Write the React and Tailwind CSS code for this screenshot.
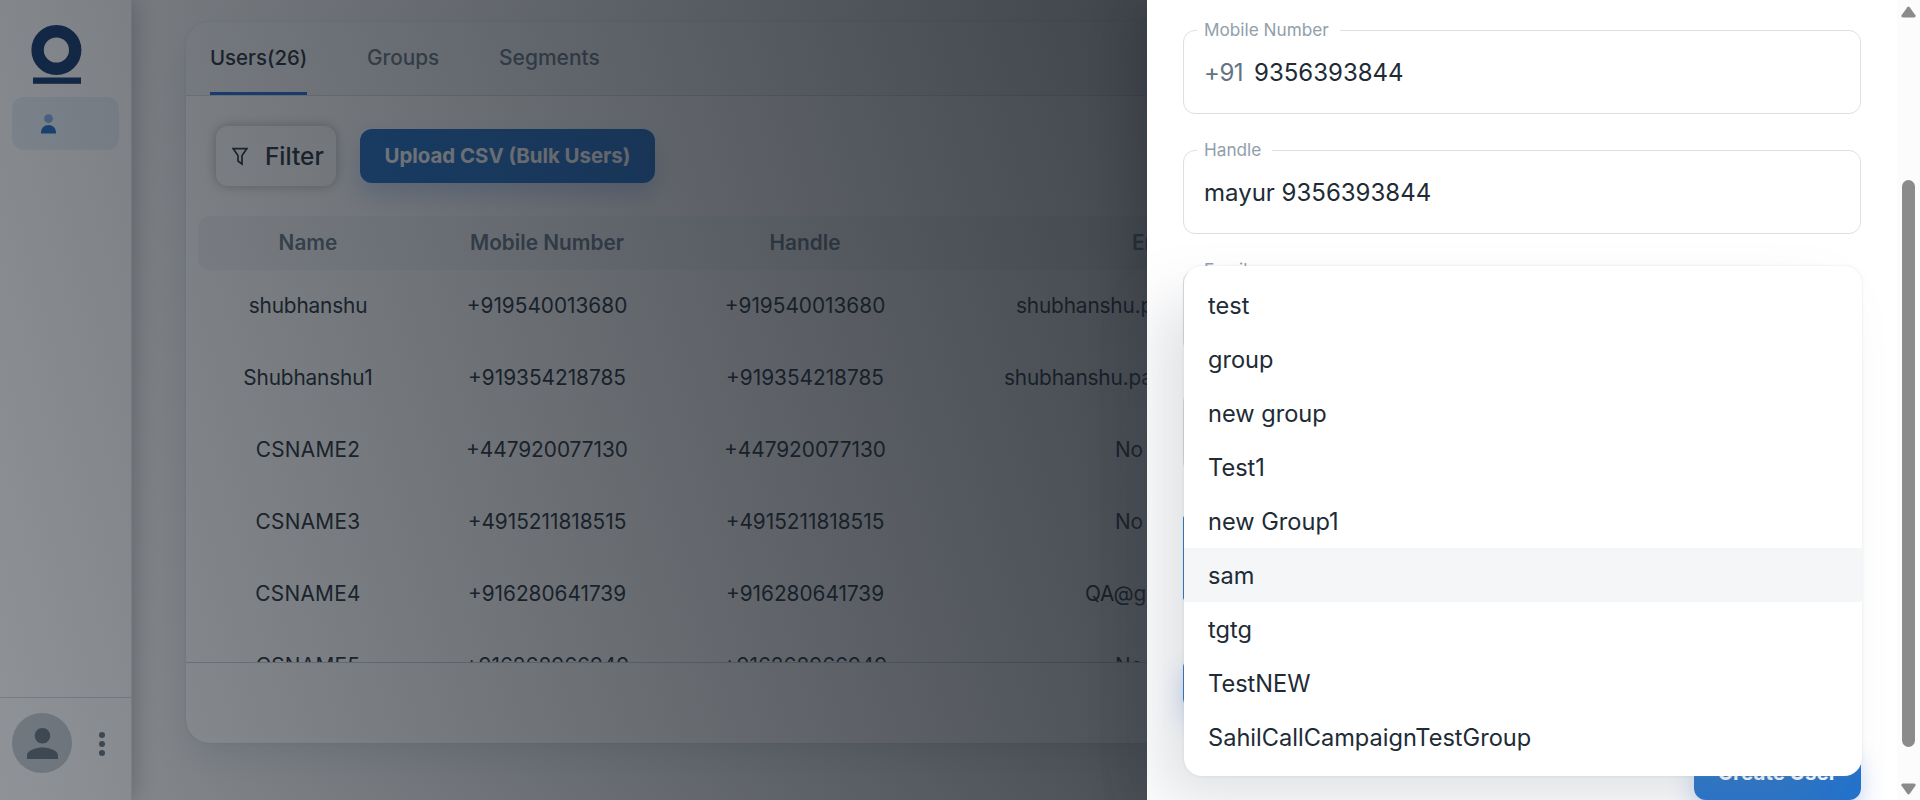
import React from "react";

const tabs = [
  { label: "Users(26)", cls: "text-[#212b36] border-[#2065d1] w-[97px] text-[20.4px]" },
  { label: "Groups", cls: "text-[#637381] border-transparent w-[72px] text-[20.8px]" },
  { label: "Segments", cls: "text-[#637381] border-transparent w-[101px] text-[21px]" },
];

const rows = [
  ["shubhanshu", "+919540013680", "shubhanshu.pandey@gallabox", "w-[286px]"],
  ["Shubhanshu1", "+919354218785", "shubhanshu.pandey1@gallabox", "w-[310px]"],
  ["CSNAME2", "+447920077130", "No Email", "w-[88px]"],
  ["CSNAME3", "+4915211818515", "No Email", "w-[88px]"],
  ["CSNAME4", "+916280641739", "QA@gallabox.io", "w-[148px]"],
  ["CSNAME5", "+916268966949", "No Email", "w-[88px]"],
];

const groups = [
  "test",
  "group",
  "new group",
  "Test1",
  "new Group1",
  "sam",
  "tgtg",
  "TestNEW",
  "SahilCallCampaignTestGroup",
];

function Sidebar() {
  return (
    <aside className="flex h-full w-[132px] shrink-0 flex-col border-r border-[#919eab]/25 bg-white shadow-[0_0_24px_rgba(0,0,0,0.3)]">
      <svg className="ml-[31px] mt-[25px] h-[59px] w-[51px]" viewBox="0 0 51 59">
        <circle cx="25.4" cy="25" r="18.8" fill="none" stroke="#0c356c" strokeWidth="12.4" />
        <rect x="2" y="52.5" width="48" height="6.3" fill="#0c356c" />
      </svg>
      <div className="ml-3 mt-[13px] flex h-[53px] w-[107px] items-center rounded-xl bg-[#1976d2]/10 pl-[29px]">
        <svg className="h-5 w-[15px]" viewBox="0 0 15 20">
          <circle cx="7.5" cy="4.6" r="4.4" fill="#1b6bc4" opacity="0.5" />
          <path d="M0 19.5V18a7.5 7 0 0 1 15 0v1.5z" fill="#1b6bc4" />
        </svg>
      </div>
      <div className="mt-auto flex h-[103px] items-start border-t border-[#919eab]/40 pl-3 pt-[15px]">
        <div className="flex h-[60px] w-[60px] items-center justify-center rounded-full bg-[#c4cdd5]">
          <svg className="h-[31px] w-[31px]" viewBox="4 4 16 16" fill="#637381">
            <path d="M12 12c2.210 0 4-1.790 4-4s-1.790-4-4-4-4 1.790-4 4 1.790 4 4 4zm0 2c-2.670 0-8 1.340-8 4v2h16v-2c0-2.660-5.330-4-8-4z" />
          </svg>
        </div>
        <svg className="ml-[27px] mt-[19px] h-6 w-[6px]" viewBox="0 0 6 24" fill="#637381">
          <circle cx="3" cy="3" r="3" />
          <circle cx="3" cy="12" r="3" />
          <circle cx="3" cy="21" r="3" />
        </svg>
      </div>
    </aside>
  );
}

function UsersCard() {
  return (
    <section className="ml-[54px] mt-[22px] flex h-[721px] w-[1680px] shrink-0 flex-col overflow-hidden rounded-3xl bg-white shadow-[0_0_3px_rgba(145,158,171,0.3),0_18px_36px_-6px_rgba(145,158,171,0.3)]">
      <nav className="flex h-[74px] shrink-0 gap-[60px] border-b border-[#919eab]/30 bg-[#f4f6f8] pl-6">
        {tabs.map((t) => (
          <div key={t.label} className={`flex h-[73px] items-center whitespace-nowrap border-b-[3px] pt-[2px] font-medium ${t.cls}`}>
            {t.label}
          </div>
        ))}
      </nav>
      <div className="flex shrink-0 items-center gap-6 pl-[30px] pt-[30px]">
        <button className="flex h-[60px] w-[120px] items-center rounded-xl bg-white pl-4 text-[24.400px] font-medium text-[#212b36] shadow-[0_0_12px_rgba(0,0,0,0.3)]">
          <svg className="h-[19px] w-4" viewBox="0 0 16 19" fill="none" stroke="#212b36" strokeWidth="1.7">
            <path d="M1.200 1.700h13.600L10 8.600v8.400l-4-3V8.600z" />
          </svg>
          <span className="ml-[17px]">Filter</span>
        </button>
        <button className="flex h-[54px] w-[295px] items-center justify-center whitespace-nowrap rounded-xl bg-[#1d6bc2] text-[20.4px] font-bold text-white shadow-[0_12px_24px_rgba(32,101,209,0.24)]">
          Upload CSV (Bulk Users)
        </button>
      </div>
      <div className="ml-3 mt-[30px] h-[446px] overflow-hidden">
        <div className="grid h-[54px] w-[1656px] grid-cols-[220px_258px_258px_450px] items-center rounded-xl bg-[#f4f6f8] text-center text-[20.800px] font-semibold text-[#637381]">
          <span>Name</span>
          <span>Mobile Number</span>
          <span>Handle</span>
          <span>Email</span>
        </div>
        {rows.map(([name, phone, email, w]) => (
          <div key={name} className="grid h-[72px] grid-cols-[220px_258px_258px_450px] items-center pb-px text-center text-[20.8px] text-[#212b36]">
            <span className={name.startsWith("CS") ? "tracking-[0.3px]" : "tracking-[-0.15px]"}>{name}</span>
            <span>{phone}</span>
            <span>{phone}</span>
            <span className={`justify-self-center whitespace-nowrap text-left tracking-[-0.15px] ${w}`}>{email}</span>
          </div>
        ))}
      </div>
      <div className="flex-1 border-t border-[#919eab]/50" />
    </section>
  );
}

function Field({ label, prefix, value, labelWidth }) {
  return (
    <div className="relative flex h-[84px] shrink-0 items-center rounded-xl border border-[#dce0e4] pl-5 pt-[2px] text-[24px] text-[#212b36]">
      <span className={`absolute -top-[13px] left-[13px] bg-white px-[7px] text-[17.200px] leading-6 text-[#919eab] ${labelWidth}`}>{label}</span>
      {prefix && <span className="mr-[11px] tracking-[-0.5px] text-[#637381]">{prefix}</span>}
      <span>{value}</span>
    </div>
  );
}

function Drawer() {
  return (
    <div className="absolute inset-y-0 right-0 flex w-[773px] bg-white shadow-[-20px_10px_40px_-4px_rgba(22,28,36,0.22)]">
      <div className="flex h-full w-[750px] flex-col gap-9 overflow-hidden pl-9 pr-9 pt-[30px]">
        <Field label="Mobile Number" prefix="+91" value="9356393844" labelWidth="w-[143px]" />
        <Field label="Handle" value="mayur 9356393844" labelWidth="w-[75px]" />
        <Field label="Email" value="" labelWidth="w-[60px]" />
        <div className="h-[84px] shrink-0 rounded-xl border border-[#dce0e4]" />
        <div className="mt-[6px] h-[84px] shrink-0 rounded-[2px] border-2 border-[#1d6bc2]" />
        <div className="mt-5 h-[54px] w-[160px] shrink-0 rounded-xl bg-[#1d6bc2] shadow-[0_12px_24px_rgba(32,101,209,0.24)]" />
        <button className="flex h-[54px] w-[167px] shrink-0 items-center justify-center self-end rounded-xl bg-[#2272cc] text-[20.6px] font-bold text-white shadow-[0_12px_24px_rgba(32,101,209,0.24)]">
          Create User
        </button>
      </div>
      <div className="flex w-[23px] flex-col items-center bg-[#fcfcfc] pt-[6px]">
        <svg className="h-3 w-[15px]" viewBox="0 0 15 12" fill="#8b8b8b">
          <path d="M6.300 1.200 Q7.500 0 8.700 1.200 L14.600 9.500 Q15 11.500 13 11.500 H2 Q0 11.500 .4 9.500z" />
        </svg>
        <div className="mt-[162px] h-[567px] w-[13px] rounded-full bg-[#8b8b8b]" />
        <svg className="mt-[36px] h-3 w-[15px] rotate-180" viewBox="0 0 15 12" fill="#8b8b8b">
          <path d="M6.300 1.200 Q7.500 0 8.700 1.200 L14.600 9.500 Q15 11.500 13 11.500 H2 Q0 11.500 .4 9.500z" />
        </svg>
      </div>
      <ul className="absolute left-[37px] top-[266px] w-[678px] rounded-[18px] bg-white py-3 text-[23.600px] text-[#212b36] shadow-[0_0_3px_rgba(145,158,171,0.24),-30px_30px_60px_-6px_rgba(120,130,142,0.24)]">
        {groups.map((g) => (
          <li key={g} className={`flex h-[54px] items-center pl-6 pt-px ${g === "sam" ? "bg-[#f4f6f8]" : ""}`}>
            {g}
          </li>
        ))}
      </ul>
    </div>
  );
}

export default function App() {
  return (
    <div className="relative flex h-[800px] w-full overflow-hidden bg-[#f4f5f6] font-['Inter',sans-serif]">
      <Sidebar />
      <UsersCard />
      <div className="absolute inset-0 bg-[linear-gradient(75deg,rgba(22,28,36,0.48)_0%,rgb(22,28,36)_100%)]" />
      <Drawer />
    </div>
  );
}
